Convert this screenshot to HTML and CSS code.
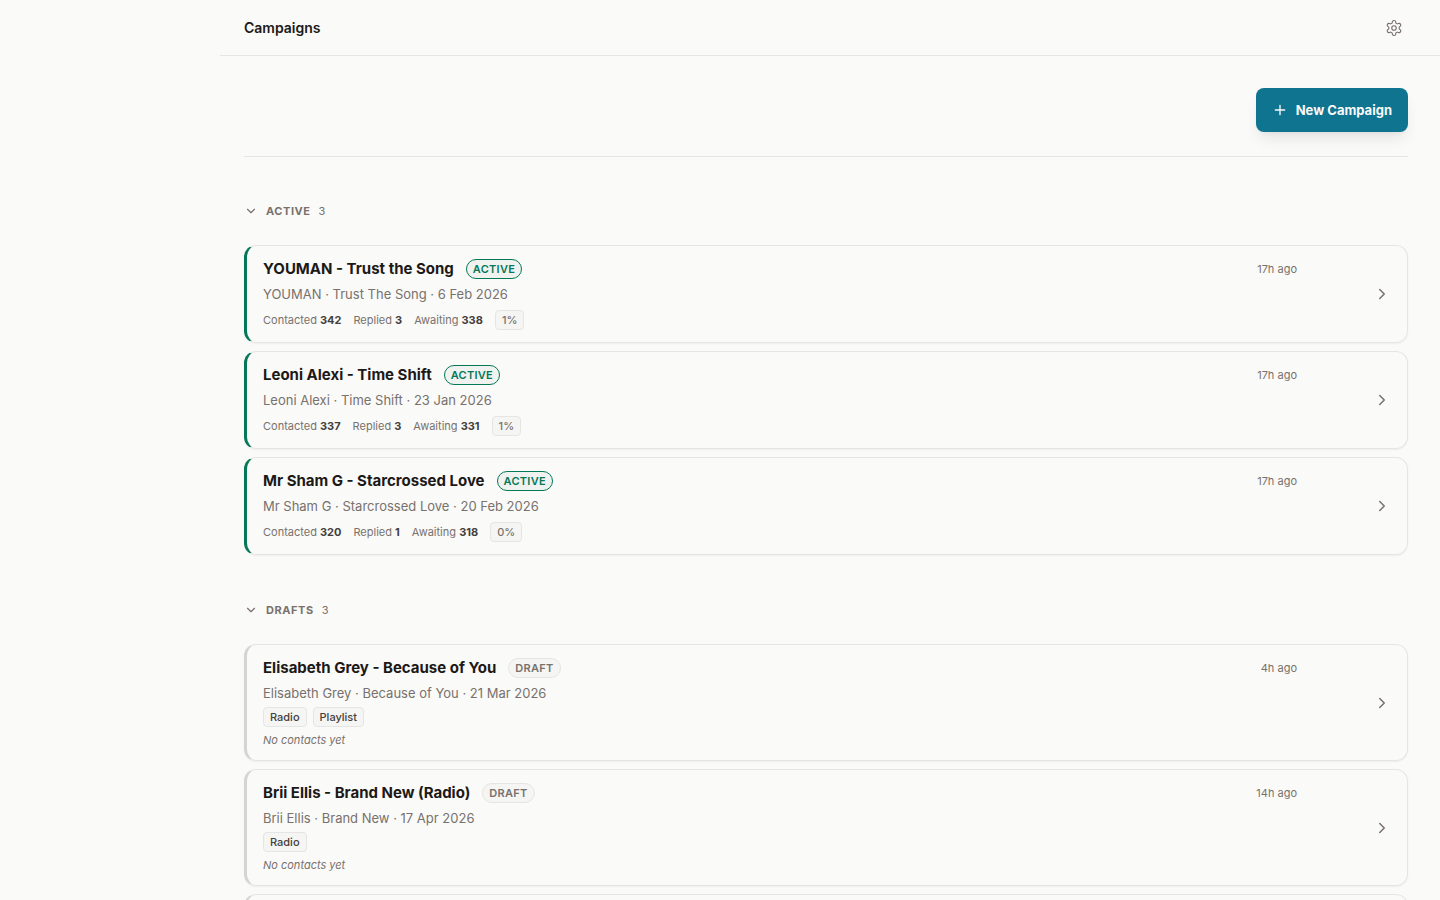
FILE: index.html
```html
<!DOCTYPE html>
<html lang="en">
<head>
  <meta charset="UTF-8">
  <meta name="viewport" content="width=device-width, initial-scale=1.0">
  <title>Campaigns</title>
  <link rel="stylesheet" href="styles.css">
</head>
<body>
  <!-- Shared icon shapes -->
  <svg class="sprite" aria-hidden="true">
    <symbol id="chevron-right" viewBox="0 0 24 24"><path d="m9 18 6-6-6-6"/></symbol>
    <symbol id="chevron-down" viewBox="0 0 24 24"><path d="m6 9 6 6 6-6"/></symbol>
  </svg>
  <div class="layout">
    <aside class="sidebar"></aside>
    <div class="content">
      <header class="topbar">
        <h1>Campaigns</h1>
        <a href="#settings" class="settings" aria-label="Settings">
          <svg class="icon" viewBox="0 0 24 24"><path d="M12.22 2h-.44a2 2 0 0 0-2 2v.18a2 2 0 0 1-1 1.73l-.43.25a2 2 0 0 1-2 0l-.15-.08a2 2 0 0 0-2.73.73l-.22.38a2 2 0 0 0 .73 2.73l.15.1a2 2 0 0 1 1 1.72v.51a2 2 0 0 1-1 1.74l-.15.09a2 2 0 0 0-.73 2.73l.22.38a2 2 0 0 0 2.73.73l.15-.08a2 2 0 0 1 2 0l.43.25a2 2 0 0 1 1 1.73V20a2 2 0 0 0 2 2h.44a2 2 0 0 0 2-2v-.18a2 2 0 0 1 1-1.73l.43-.25a2 2 0 0 1 2 0l.15.08a2 2 0 0 0 2.73-.73l.22-.39a2 2 0 0 0-.73-2.73l-.15-.08a2 2 0 0 1-1-1.74v-.5a2 2 0 0 1 1-1.74l.15-.09a2 2 0 0 0 .73-2.73l-.22-.38a2 2 0 0 0-2.73-.73l-.15.08a2 2 0 0 1-2 0l-.43-.25a2 2 0 0 1-1-1.73V4a2 2 0 0 0-2-2z"/><circle cx="12" cy="12" r="3"/></svg>
        </a>
      </header>
      <main>
        <div class="actions">
          <button type="button" class="btn-primary">
            <svg class="icon" viewBox="0 0 24 24"><path d="M12 5v14M5 12h14"/></svg>
            New Campaign
          </button>
        </div>

        <section class="group">
          <button type="button" class="group-toggle" aria-expanded="true">
            <svg class="icon"><use href="#chevron-down"/></svg>
            <span class="group-name">Active</span>
            <span class="group-count">3</span>
          </button>
          <div class="cards">
            <a href="#youman" class="card card-active">
              <div class="card-body">
                <div class="title-row"><h2>YOUMAN - Trust the Song</h2><span class="badge badge-active">Active</span></div>
                <p class="subtitle">YOUMAN · Trust The Song · 6 Feb 2026</p>
                <div class="stats"><span>Contacted <b>342</b></span><span>Replied <b>3</b></span><span>Awaiting <b>338</b></span><span class="rate">1%</span></div>
              </div>
              <span class="time">17h ago</span>
              <svg class="icon"><use href="#chevron-right"/></svg>
            </a>
            <a href="#leoni-alexi" class="card card-active">
              <div class="card-body">
                <div class="title-row"><h2>Leoni Alexi - Time Shift</h2><span class="badge badge-active">Active</span></div>
                <p class="subtitle">Leoni Alexi · Time Shift · 23 Jan 2026</p>
                <div class="stats"><span>Contacted <b>337</b></span><span>Replied <b>3</b></span><span>Awaiting <b>331</b></span><span class="rate">1%</span></div>
              </div>
              <span class="time">17h ago</span>
              <svg class="icon"><use href="#chevron-right"/></svg>
            </a>
            <a href="#mr-sham-g" class="card card-active">
              <div class="card-body">
                <div class="title-row"><h2>Mr Sham G - Starcrossed Love</h2><span class="badge badge-active">Active</span></div>
                <p class="subtitle">Mr Sham G · Starcrossed Love · 20 Feb 2026</p>
                <div class="stats"><span>Contacted <b>320</b></span><span>Replied <b>1</b></span><span>Awaiting <b>318</b></span><span class="rate">0%</span></div>
              </div>
              <span class="time">17h ago</span>
              <svg class="icon"><use href="#chevron-right"/></svg>
            </a>
          </div>
        </section>

        <section class="group">
          <button type="button" class="group-toggle" aria-expanded="true">
            <svg class="icon"><use href="#chevron-down"/></svg>
            <span class="group-name">Drafts</span>
            <span class="group-count">3</span>
          </button>
          <div class="cards">
            <a href="#elisabeth-grey" class="card">
              <div class="card-body">
                <div class="title-row"><h2>Elisabeth Grey - Because of You</h2><span class="badge">Draft</span></div>
                <p class="subtitle">Elisabeth Grey · Because of You · 21 Mar 2026</p>
                <div class="tags"><span class="tag">Radio</span><span class="tag">Playlist</span></div>
                <p class="empty">No contacts yet</p>
              </div>
              <span class="time">4h ago</span>
              <svg class="icon"><use href="#chevron-right"/></svg>
            </a>
            <a href="#brii-ellis" class="card">
              <div class="card-body">
                <div class="title-row"><h2>Brii Ellis - Brand New (Radio)</h2><span class="badge">Draft</span></div>
                <p class="subtitle">Brii Ellis · Brand New · 17 Apr 2026</p>
                <div class="tags"><span class="tag">Radio</span></div>
                <p class="empty">No contacts yet</p>
              </div>
              <span class="time">14h ago</span>
              <svg class="icon"><use href="#chevron-right"/></svg>
            </a>
            <a href="#draft" class="card" aria-label="Draft campaign">
              <div class="card-body"></div>
            </a>
          </div>
        </section>
      </main>
    </div>
  </div>
</body>
</html>
```

FILE: styles.css
```css
* {
  margin: 0;
  padding: 0;
  box-sizing: border-box;
}
body {
  font-family: Inter, sans-serif;
  font-size: 13px;
  line-height: 20px;
  background: #fafaf9;
  color: #1c1917;
}
a {
  color: inherit;
  text-decoration: none;
}
button {
  font: inherit;
  border: 0;
  background: none;
  cursor: pointer;
}
.sprite {
  display: none;
}
.icon {
  width: 16px;
  height: 16px;
  flex: none;
  fill: none;
  stroke: currentColor;
  stroke-width: 2;
  stroke-linecap: round;
  stroke-linejoin: round;
}
.layout {
  display: grid;
  grid-template-columns: 220px 1fr;
  height: 100vh;
  overflow: hidden;
}
.content {
  min-width: 0;
}

/* Top bar */
.topbar {
  display: flex;
  justify-content: space-between;
  align-items: center;
  height: 56px;
  padding: 0 24px;
  border-bottom: 1px solid #e5e5e4;
}
.topbar h1 {
  font-size: 14px;
  font-weight: 600;
}
.settings {
  display: flex;
  align-items: center;
  justify-content: center;
  width: 44px;
  height: 44px;
  color: #78716c;
}
.settings .icon {
  width: 18px;
  height: 18px;
  stroke-width: 1.5;
}

main {
  padding: 32px 32px 32px 24px;
}
.actions {
  display: flex;
  justify-content: flex-end;
  padding-bottom: 24px;
  margin-bottom: 32px;
  border-bottom: 1px solid #e5e5e4;
}
.btn-primary {
  display: flex;
  align-items: center;
  gap: 8px;
  height: 44px;
  padding: 0 16px;
  border-radius: 8px;
  background: #0e7490;
  color: #fafaf9;
  font-weight: 700;
  box-shadow: 0 10px 15px -3px rgba(0, 0, 0, 0.08), 0 4px 6px -4px rgba(0, 0, 0, 0.08);
}

/* Campaign groups */
.group {
  margin-bottom: 33px;
}
.group-toggle {
  display: flex;
  align-items: center;
  gap: 8px;
  height: 44px;
  margin-bottom: 12px;
  font-size: 11px;
  color: #78716c;
}
.group-toggle .icon {
  width: 14px;
  height: 14px;
}
.group-name {
  font-weight: 700;
  letter-spacing: 0.05em;
  text-transform: uppercase;
}
.cards {
  display: flex;
  flex-direction: column;
  gap: 8px;
}
.card {
  display: flex;
  align-items: flex-start;
  padding: 12px 16px;
  min-height: 98px;
  border: 1px solid #e5e5e4;
  border-left: 3px solid #d4d4d3;
  border-radius: 12px;
  box-shadow: 0 1px 2px rgba(0, 0, 0, 0.05);
}
.card-active {
  border-left-color: #047857;
}
.card > .icon {
  width: 18px;
  height: 18px;
  align-self: center;
  color: #78716c;
}
.card-body {
  flex: 1;
  min-width: 0;
}
.title-row {
  display: flex;
  align-items: center;
  gap: 12px;
  height: 22px;
  margin-bottom: 4px;
}
.title-row h2 {
  font-size: 15px;
  font-weight: 700;
}
.badge {
  padding: 0 6px;
  border: 1px solid #e5e5e4;
  border-radius: 10px;
  background: #f5f5f4;
  color: #78716c;
  font-size: 11px;
  font-weight: 600;
  line-height: 18px;
  letter-spacing: 0.025em;
  text-transform: uppercase;
}
.badge-active {
  border-color: #047857;
  background: #f0f2f0;
  color: #047857;
}
.subtitle {
  color: #78716c;
}
.stats {
  display: flex;
  align-items: center;
  gap: 12px;
  margin-top: 6px;
  font-size: 11px;
  color: #78716c;
}
.stats b {
  font-weight: 700;
  color: #44403c;
}
.rate,
.tag {
  padding: 0 6px;
  border: 1px solid #e5e5e4;
  border-radius: 4px;
  background: #f5f5f4;
  font-size: 11px;
  font-weight: 500;
  line-height: 18px;
}
.tags {
  display: flex;
  gap: 6px;
  margin: 4px 0 5px;
  color: #44403c;
}
.empty {
  font-size: 11px;
  line-height: 16px;
  font-style: oblique 12deg;
  color: #78716c;
}
.time {
  margin-right: 76px;
  font-size: 11px;
  line-height: 22px;
  color: #78716c;
}
```
